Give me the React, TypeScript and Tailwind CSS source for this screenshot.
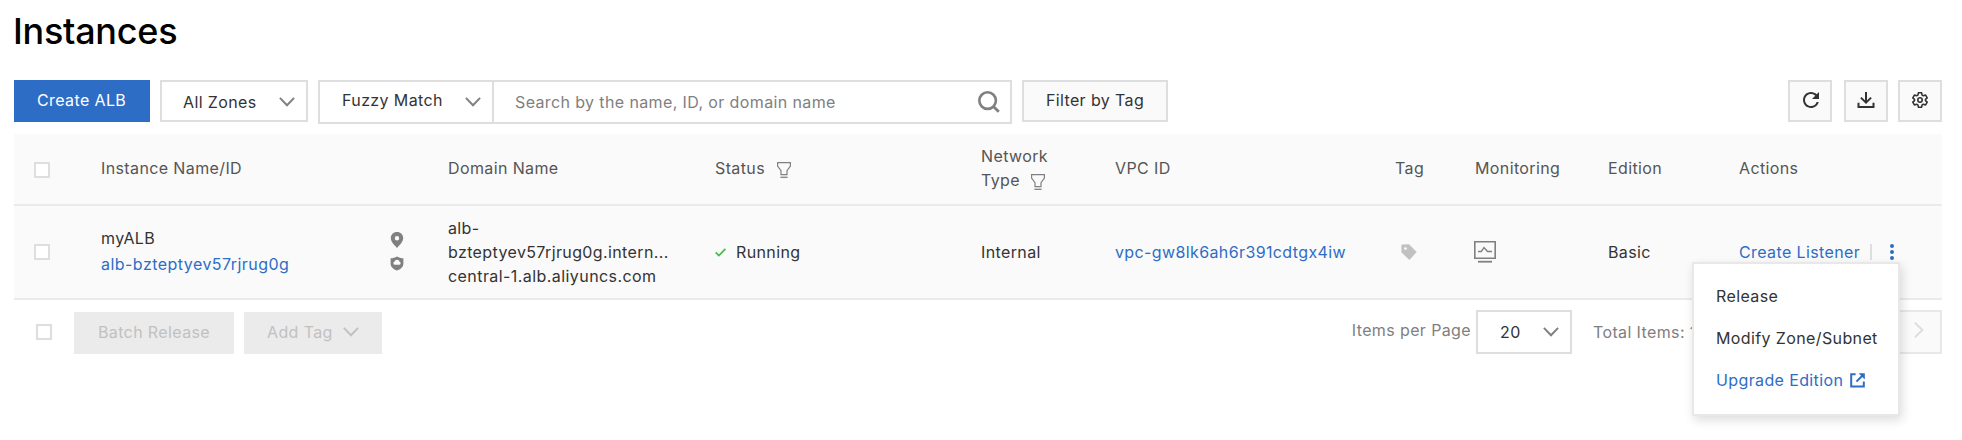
import type { ReactNode } from "react";

function Checkbox({ className = "" }: { className?: string }) {
  return <span role="checkbox" aria-checked="false" className={`block size-4 shrink-0 border-2 border-[#dedede] bg-white ${className}`} />;
}

function Chevron({ className = "" }: { className?: string }) {
  return (
    <svg viewBox="0 0 16 10" className={`h-2.5 w-4 shrink-0 ${className}`} fill="none" stroke="currentColor" strokeWidth="2">
      <path d="M0.9 0.9 8 8.2 15.1 0.9" />
    </svg>
  );
}

function FunnelIcon({ className = "" }: { className?: string }) {
  return (
    <svg viewBox="0 0 14 16" className={`h-4 w-3.5 shrink-0 text-[#808080] ${className}`} fill="none" stroke="currentColor" strokeWidth="1.2">
      <path d="M0.6 0.6H13.4V4L10 8.6V12.6H4V8.6L0.6 4Z" />
      <path d="M3.4 15.3H10.6" strokeWidth="1.3" />
    </svg>
  );
}

function IconButton({ label, children, className = "" }: { label: string; children: ReactNode; className?: string }) {
  return (
    <button aria-label={label} className={`flex h-[42px] w-11 items-start justify-center border-2 border-[#dedede] bg-[#fafafa] pt-1.5 text-[#333] ${className}`}>
      {children}
    </button>
  );
}

function RefreshIcon() {
  return (
    <svg viewBox="0 0 24 24" className="ml-px size-6" fill="currentColor">
      <path d="M17.65 6.35C16.2 4.9 14.21 4 12 4c-4.42 0-7.99 3.58-7.99 8s3.57 8 7.99 8c3.73 0 6.84-2.55 7.73-6h-2.08A5.99 5.99 0 0 1 12 18c-3.31 0-6-2.69-6-6s2.69-6 6-6c1.66 0 3.14.69 4.22 1.78L13 11h7V4l-2.35 2.35z" />
    </svg>
  );
}

function DownloadIcon() {
  return (
    <svg viewBox="0 0 24 24" className="mr-px size-6" fill="none" stroke="currentColor" strokeWidth="2">
      <path d="M12 4V14.4M6.9 9.6 12 14.6 17.1 9.6" />
      <path d="M4.5 14.8V19H19.5V14.8" />
    </svg>
  );
}

function GearIcon() {
  return (
    <svg viewBox="0 0 24 24" className="size-6" fill="none" stroke="currentColor" strokeWidth="1.6" strokeLinejoin="round">
      <path d="M10.4 4.8H13.6L14.1 7.1 15.4 7.8 17.6 7.1 19.2 9.8 17.5 11.3V12.7L19.2 14.2 17.6 16.9 15.4 16.2 14.1 16.9 13.6 19.2H10.4L9.9 16.9 8.6 16.2 6.4 16.9 4.8 14.2 6.5 12.7V11.3L4.8 9.8 6.4 7.1 8.6 7.8 9.9 7.1Z" />
      <circle cx="12" cy="12" r="2.2" />
    </svg>
  );
}

function SearchIcon() {
  return (
    <svg viewBox="0 0 22 22" className="size-[22px]" fill="none" stroke="#808080" strokeWidth="2.6">
      <circle cx="9.6" cy="9.6" r="8.3" />
      <path d="M15.4 15.4 20.8 20.8" strokeWidth="2.8" />
    </svg>
  );
}

function PinIcon() {
  return (
    <svg viewBox="0 0 14 16" className="h-4 w-3.5" fill="#808080" fillRule="evenodd">
      <path d="M7 0C3.4 0 0.8 2.7 0.8 6c0 3.6 3.4 6.8 6.2 10 2.8-3.2 6.2-6.4 6.2-10C13.2 2.7 10.6 0 7 0Zm0 4a2.2 2.2 0 1 1 0 4.4A2.2 2.2 0 0 1 7 4Z" />
    </svg>
  );
}

function ShieldIcon() {
  return (
    <svg viewBox="0 0 14 15" className="h-[15px] w-3.5">
      <path d="M7 0.4C9 1.6 11 2.1 13.4 2.2V7.4C13.4 11 10.6 13 7 14.6 3.4 13 0.6 11 0.6 7.4V2.2C3 2.1 5 1.6 7 0.4Z" fill="#808080" />
      <path d="M4.6 8.7a1.5 1.5 0 0 1-.2-2.9 2.7 2.7 0 0 1 5.2 0 1.5 1.5 0 0 1-.2 2.9Z" fill="#fafafa" />
    </svg>
  );
}

function TagIcon() {
  return (
    <svg viewBox="0 0 16 16" className="size-4" fill="#c1c1c1" fillRule="evenodd">
      <path d="M1.6 0.4 8 0.2 15.7 8 8.4 15.9 0.4 8.4V1.6C0.4 0.9 0.9 0.4 1.6 0.4ZM4.5 3.2a1.4 1.4 0 1 0 0 2.8 1.4 1.4 0 0 0 0-2.8Z" />
    </svg>
  );
}

function MonitorIcon() {
  return (
    <svg viewBox="0 0 22 22" className="size-[22px]" fill="none" stroke="#808080">
      <path d="M0.8 0.8H21.2V17.2H0.8Z" strokeWidth="1.6" />
      <path d="M4 10.6H7.2L10 6.6 13.6 10.4H18" strokeWidth="1.5" />
      <path d="M4 20.7H18" strokeWidth="1.8" />
    </svg>
  );
}

function ExternalIcon() {
  return (
    <svg viewBox="0 0 15 15" className="size-[15px]" fill="none" stroke="currentColor" strokeWidth="2">
      <path d="M5.6 1.2H1.2V13.6H13.8V8.6" />
      <path d="M6.4 8.6 12.8 2.2" />
      <path d="M8.6 0.3H14.8V6.5Z" fill="currentColor" stroke="none" />
    </svg>
  );
}

const columns = "grid grid-cols-[87px_347px_267px_266px_134px_280px_79px_134px_131px_1fr] items-center";

export default function App() {
  return (
    <div className="h-[440px] overflow-hidden bg-white pr-5 pl-3.5 font-['Inter',sans-serif] text-base leading-6 tracking-[0.38px] text-[#333]">
      <h1 className="-ml-px pt-[9px] text-[36px] leading-[44px] font-medium tracking-[-0.27px] text-black">Instances</h1>

      <div className="mt-[27px] flex h-[54px] items-start">
        <button className="flex h-[42px] w-[136px] items-start bg-[#2d6dc6] pt-2 pl-[23px] text-white">Create ALB</button>
        <div className="ml-2.5 flex h-[42px] w-[148px] items-start border-2 border-[#dedede] pt-2 pl-[21px]">
          <span>All Zones</span>
          <Chevron className="mt-[7px] mr-[11px] ml-auto text-[#808080]" />
        </div>
        <div className="ml-2.5 flex h-11 w-[694px] border-2 border-[#dedede]">
          <div className="flex w-[174px] items-start border-r-2 border-[#dedede] pt-1.5 pl-[22px]">
            <span>Fuzzy Match</span>
            <Chevron className="mt-[9px] mr-[11px] ml-auto text-[#808080]" />
          </div>
          <div className="flex flex-1 items-start pt-2 pl-[21px] text-[#808080]">
            <span>Search by the name, ID, or domain name</span>
            <span className="mt-px mr-2.5 ml-auto"><SearchIcon /></span>
          </div>
        </div>
        <button className="ml-2.5 flex h-[42px] w-[146px] items-start justify-center border-2 border-[#dedede] bg-[#fafafa] pt-1.5">Filter by Tag</button>
        <IconButton label="Refresh" className="ml-auto"><RefreshIcon /></IconButton>
        <IconButton label="Download" className="ml-3"><DownloadIcon /></IconButton>
        <IconButton label="Settings" className="ml-2.5"><GearIcon /></IconButton>
      </div>

      <div className="bg-[#fafafa]">
        <div className={`${columns} h-[72px] border-b-2 border-[#ebebeb] pb-0.5 text-[#555]`}>
          <Checkbox className="mt-1 ml-5" />
          <span>Instance Name/ID</span>
          <span>Domain Name</span>
          <span className="flex items-center">Status<FunnelIcon className="mt-[3px] ml-3" /></span>
          <span>
            Network
            <span className="flex items-center">Type<FunnelIcon className="mt-[3px] ml-[11px]" /></span>
          </span>
          <span>VPC ID</span>
          <span>Tag</span>
          <span className="pl-px">Monitoring</span>
          <span>Edition</span>
          <span>Actions</span>
        </div>
        <div className={`${columns} h-[94px] border-b-2 border-[#ebebeb]`}>
          <Checkbox className="ml-5" />
          <div className="flex items-center">
            <div className="-mt-0.5 flex flex-col gap-0.5">
              <span>myALB</span>
              <span className="tracking-[0.46px] text-[#2d6dc6]">alb-bzteptyev57rjrug0g</span>
            </div>
            <div className="-mt-0.5 mr-11 ml-auto flex flex-col gap-2">
              <PinIcon />
              <ShieldIcon />
            </div>
          </div>
          <div className="flex flex-col">
            <span>alb-</span>
            <span>bzteptyev57rjrug0g.intern...</span>
            <span className="tracking-[0.43px]">central-1.alb.aliyuncs.com</span>
          </div>
          <div className="flex items-center">
            <svg viewBox="0 0 11 9" className="mr-2.5 h-[9px] w-[11px]" fill="none" stroke="#4cb748" strokeWidth="1.7">
              <path d="M0.7 4.4 3.9 7.6 10.4 0.9" />
            </svg>
            <span>Running</span>
          </div>
          <span>Internal</span>
          <span className="text-[#2d6dc6]">vpc-gw8lk6ah6r391cdtgx4iw</span>
          <span className="pl-1.5"><TagIcon /></span>
          <MonitorIcon />
          <span>Basic</span>
          <div className="relative flex items-center text-[#2d6dc6]">
            <span>Create Listener</span>
            <span className="absolute left-[131px] h-4 w-0.5 bg-[#dedede]" />
            <svg viewBox="0 0 4 16" className="absolute left-[151px] h-4 w-1" fill="currentColor">
              <circle cx="2" cy="2" r="2" />
              <circle cx="2" cy="8" r="2" />
              <circle cx="2" cy="14" r="2" />
            </svg>
            <div className="absolute top-[22px] right-[42px] z-10 flex h-[154px] w-52 flex-col gap-[18px] border-2 border-[#e8e8e8] bg-white pt-5 pl-[22px] whitespace-nowrap text-[#333] shadow-[2px_4px_10px_rgba(0,0,0,0.14)]">
              <span>Release</span>
              <span>Modify Zone/Subnet</span>
              <span className="flex items-center gap-[7px] text-[#2d6dc6]">
                Upgrade Edition
                <ExternalIcon />
              </span>
            </div>
          </div>
        </div>
      </div>

      <div className="flex h-[54px] items-end">
        <Checkbox className="mb-3.5 ml-[22px]" />
        <button className="ml-[22px] flex h-[42px] w-40 items-start justify-center bg-[#ebebeb] pt-2 text-[#c1c1c1]">Batch Release</button>
        <button className="ml-2.5 flex h-[42px] w-[138px] items-start bg-[#ebebeb] pt-2 pl-[23px] text-[#c1c1c1]">
          Add Tag
          <Chevron className="mt-[7px] mr-[23px] ml-auto" />
        </button>
        <div className="ml-auto flex h-11 items-start text-[#808080]">
          <span className="mr-[5px] pt-2">Items per Page</span>
          <div className="flex h-11 w-24 items-start border-2 border-[#dedede] pt-2 pl-[22px] text-[#333]">
            20
            <Chevron className="mt-[7px] mr-[11px] ml-auto text-[#808080]" />
          </div>
          <span className="ml-[21px] w-[263px] pt-2.5">Total Items: 1</span>
          <div className="flex h-11 w-[86px] items-start justify-end border-2 border-[#e8e8e8] bg-[#fafafa] pt-2.5 pr-4 text-[#dedede]">
            <svg viewBox="0 0 10 16" className="h-4 w-2.5" fill="none" stroke="currentColor" strokeWidth="2">
              <path d="M0.9 0.7 8.4 8 0.9 15.3" />
            </svg>
          </div>
        </div>
      </div>
    </div>
  );
}
